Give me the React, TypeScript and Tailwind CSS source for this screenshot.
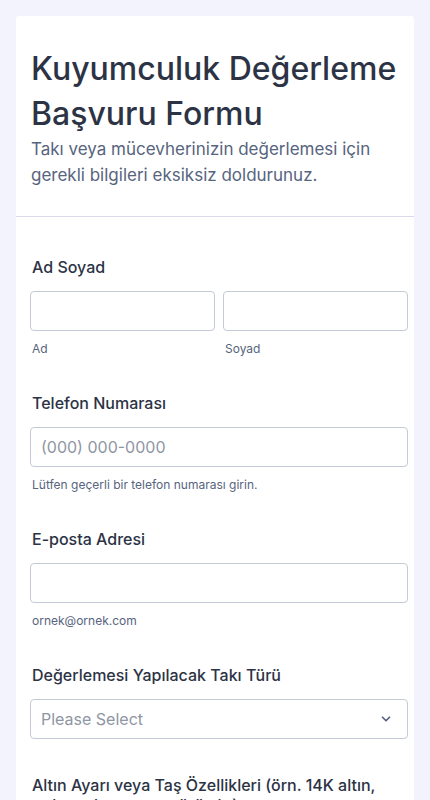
import { ChevronDown } from "lucide-react";

function Label({ children }: { children: React.ReactNode }) {
  return <label className="block px-[2px] text-base font-medium leading-5 text-[#2c3345]">{children}</label>;
}

function Sub({ children }: { children: React.ReactNode }) {
  return <p className="mt-[10px] px-[2px] text-xs leading-4 text-[#57647e]">{children}</p>;
}

const inputCls =
  "block h-10 w-full rounded-[4px] border border-[#c3cad8] bg-white px-[10px] text-base text-[#2c3345] outline-none placeholder:text-[#8f96a3]";

export default function App() {
  return (
    <div className="min-h-screen bg-[#f3f3fe] px-4 pt-4 font-['Inter',sans-serif]">
      <div className="rounded-[3px] bg-white">
        <div className="border-b border-[#d8dae9] pl-[15px] pr-2 pb-[28px] pt-[30px]">
          <h1 className="text-[32px] font-medium leading-[45px] text-[#2c3345]">
            Kuyumculuk Değerleme Başvuru Formu
          </h1>
          <p className="max-w-[350px] text-[17px] leading-[26px] text-[#57647e]">
            Takı veya mücevherinizin değerlemesi için gerekli bilgileri eksiksiz doldurunuz.
          </p>
        </div>

        <div className="flex flex-col gap-9 pl-[14px] pr-[6px] pt-10 pb-10">
          <div>
            <Label>Ad Soyad</Label>
            <div className="mt-[14px] grid grid-cols-2 gap-2">
              <div>
                <input className={inputCls} />
                <Sub>Ad</Sub>
              </div>
              <div>
                <input className={inputCls} />
                <Sub>Soyad</Sub>
              </div>
            </div>
          </div>

          <div>
            <Label>Telefon Numarası</Label>
            <input className={inputCls + " mt-[14px]"} placeholder="(000) 000-0000" />
            <Sub>Lütfen geçerli bir telefon numarası girin.</Sub>
          </div>

          <div>
            <Label>E-posta Adresi</Label>
            <input className={inputCls + " mt-[14px]"} />
            <Sub>ornek@ornek.com</Sub>
          </div>

          <div>
            <Label>Değerlemesi Yapılacak Takı Türü</Label>
            <div className="relative mt-[14px] flex h-10 items-center rounded-[4px] border border-[#c3cad8] bg-white px-[10px]">
              <span className="text-base text-[#8f96a3]">Please Select</span>
              <ChevronDown className="absolute right-[14px] h-[14px] w-[14px] text-[#57647e]" strokeWidth={3} />
            </div>
          </div>

          <div>
            <Label>Altın Ayarı veya Taş Özellikleri (örn. 14K altın, pırlanta karatı, taş türü vb.)</Label>
            <textarea className="mt-[14px] block h-24 w-full rounded-[4px] border border-[#c3cad8]" />
          </div>
        </div>
      </div>
    </div>
  );
}
